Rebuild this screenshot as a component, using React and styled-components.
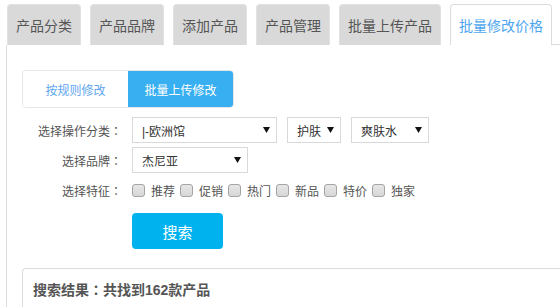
import React from "react";
import styled, { createGlobalStyle } from "styled-components";

const Global = createGlobalStyle`
  html, body { margin: 0; padding: 0; background: #fff; overflow: hidden; }
  body {
    font-family: "Liberation Sans", "Noto Sans CJK SC", sans-serif;
  }
`;

const Page = styled.div`
  padding: 4px 0 0 6px;
  box-sizing: border-box;
`;

const TabBar = styled.div`
  display: flex;
  align-items: stretch;
  height: 41px;
  padding-left: 1px;
`;

const Tab = styled.div`
  box-sizing: border-box;
  height: 41px;
  padding: 2px 8px 0;
  display: flex;
  align-items: center;
  font-size: 14px;
  line-height: 16px;
  white-space: nowrap;
  border-radius: 4px 4px 0 0;
  border: 1px solid ${(p) => (p.$active ? "#dcdcdc" : "#e2e2e2")};
  border-bottom: none;
  background: ${(p) => (p.$active ? "#fff" : "#d9d9d9")};
  color: ${(p) => (p.$active ? "#4ea6ef" : "#555")};
  margin-right: ${(p) => (p.$active ? "0" : "9px")};
`;

const TabFill = styled.div`
  flex: 1;
  border-bottom: 1px solid #dcdcdc;
`;

const Panel = styled.div`
  border-left: 1px solid #dcdcdc;
  padding: 25px 0 0 15px;
`;

const Segmented = styled.div`
  display: inline-flex;
  border: 1px solid #e6e6e6;
  border-radius: 4px;
  overflow: hidden;
  height: 38px;
  box-sizing: border-box;
`;

const Segment = styled.div`
  width: 105px;
  display: flex;
  align-items: center;
  justify-content: center;
  font-size: 12px;
  background: ${(p) => (p.$active ? "#37aff1" : "#fff")};
  color: ${(p) => (p.$active ? "#fff" : "#5fa6ee")};
`;

const Form = styled.div`
  display: grid;
  grid-template-columns: 100px 1fr;
  column-gap: 10px;
  row-gap: 4px;
  margin-top: 9px;
`;

const Label = styled.div`
  height: 26px;
  display: flex;
  align-items: center;
  justify-content: flex-end;
  font-size: 12px;
  color: #555;
  white-space: nowrap;
`;

const Colon = styled.span`
  font-family: "Noto Sans CJK TC", "Noto Sans CJK SC", sans-serif;
  display: inline-block;
  width: 1em;
  text-align: center;
`;

const Controls = styled.div`
  display: flex;
  align-items: center;
  gap: ${(p) => p.$gap ?? 10}px;
  height: 26px;
`;

const SelectBox = styled.div`
  box-sizing: border-box;
  width: ${(p) => p.$w}px;
  height: 26px;
  border: 1px solid #d9d9d9;
  display: flex;
  align-items: center;
  justify-content: space-between;
  padding: 0 6px 0 9px;
  font-size: 12px;
  color: #333;
  white-space: nowrap;
`;

const Arrow = () => (
  <svg width="7" height="6" viewBox="0 0 7 6">
    <polygon points="0,0 7,0 3.5,6" fill="#111" />
  </svg>
);

const Select = ({ w, children }) => (
  <SelectBox $w={w}>
    <span>{children}</span>
    <Arrow />
  </SelectBox>
);

const CheckItem = styled.label`
  display: flex;
  align-items: center;
  width: 48px;
  font-size: 12px;
  color: #555;
`;

const Check = styled.input.attrs({ type: "checkbox" })`
  appearance: none;
  margin: 0 6px 0 0;
  width: 13px;
  height: 13px;
  box-sizing: border-box;
  border: 1px solid #a4a4a4;
  border-radius: 3px;
  background: linear-gradient(#e6e6e6, #d8d8d8);
`;

const SearchButton = styled.button`
  margin: 10px 0 0 110px;
  width: 91px;
  height: 36px;
  border: none;
  border-radius: 4px;
  background: #00b3ef;
  color: #fff;
  font-family: inherit;
  font-size: 15px;
  display: block;
`;

const Results = styled.div`
  margin-top: 19px;
  border: 1px solid #dcdcdc;
  border-right: none;
  border-bottom: none;
  border-radius: 4px 0 0 0;
`;

const ResultHead = styled.div`
  height: 40px;
  display: flex;
  align-items: center;
  padding-left: 10px;
  font-size: 14px;
  font-weight: bold;
  color: #555;
`;

const tabs = ["产品分类", "产品品牌", "添加产品", "产品管理", "批量上传产品"];
const feats = ["推荐", "促销", "热门", "新品", "特价", "独家"];

export default function App() {
  return (
    <Page>
      <Global />
      <TabBar>
        {tabs.map((t) => (
          <Tab key={t}>{t}</Tab>
        ))}
        <Tab $active>批量修改价格</Tab>
        <TabFill />
      </TabBar>
      <Panel>
        <Segmented>
          <Segment>按规则修改</Segment>
          <Segment $active>批量上传修改</Segment>
        </Segmented>
        <Form>
          <Label>
            选择操作分类<Colon>：</Colon>
          </Label>
          <Controls>
            <Select w={145}>|-欧洲馆</Select>
            <Select w={54}>护肤</Select>
            <Select w={78}>爽肤水</Select>
          </Controls>
          <Label>
            选择品牌<Colon>：</Colon>
          </Label>
          <Controls>
            <Select w={116}>杰尼亚</Select>
          </Controls>
          <Label>
            选择特征<Colon>：</Colon>
          </Label>
          <Controls $gap={0}>
            {feats.map((f) => (
              <CheckItem key={f}>
                <Check />
                {f}
              </CheckItem>
            ))}
          </Controls>
        </Form>
        <SearchButton>搜索</SearchButton>
        <Results>
          <ResultHead>
            搜索结果<Colon>：</Colon>共找到162款产品
          </ResultHead>
        </Results>
      </Panel>
    </Page>
  );
}
